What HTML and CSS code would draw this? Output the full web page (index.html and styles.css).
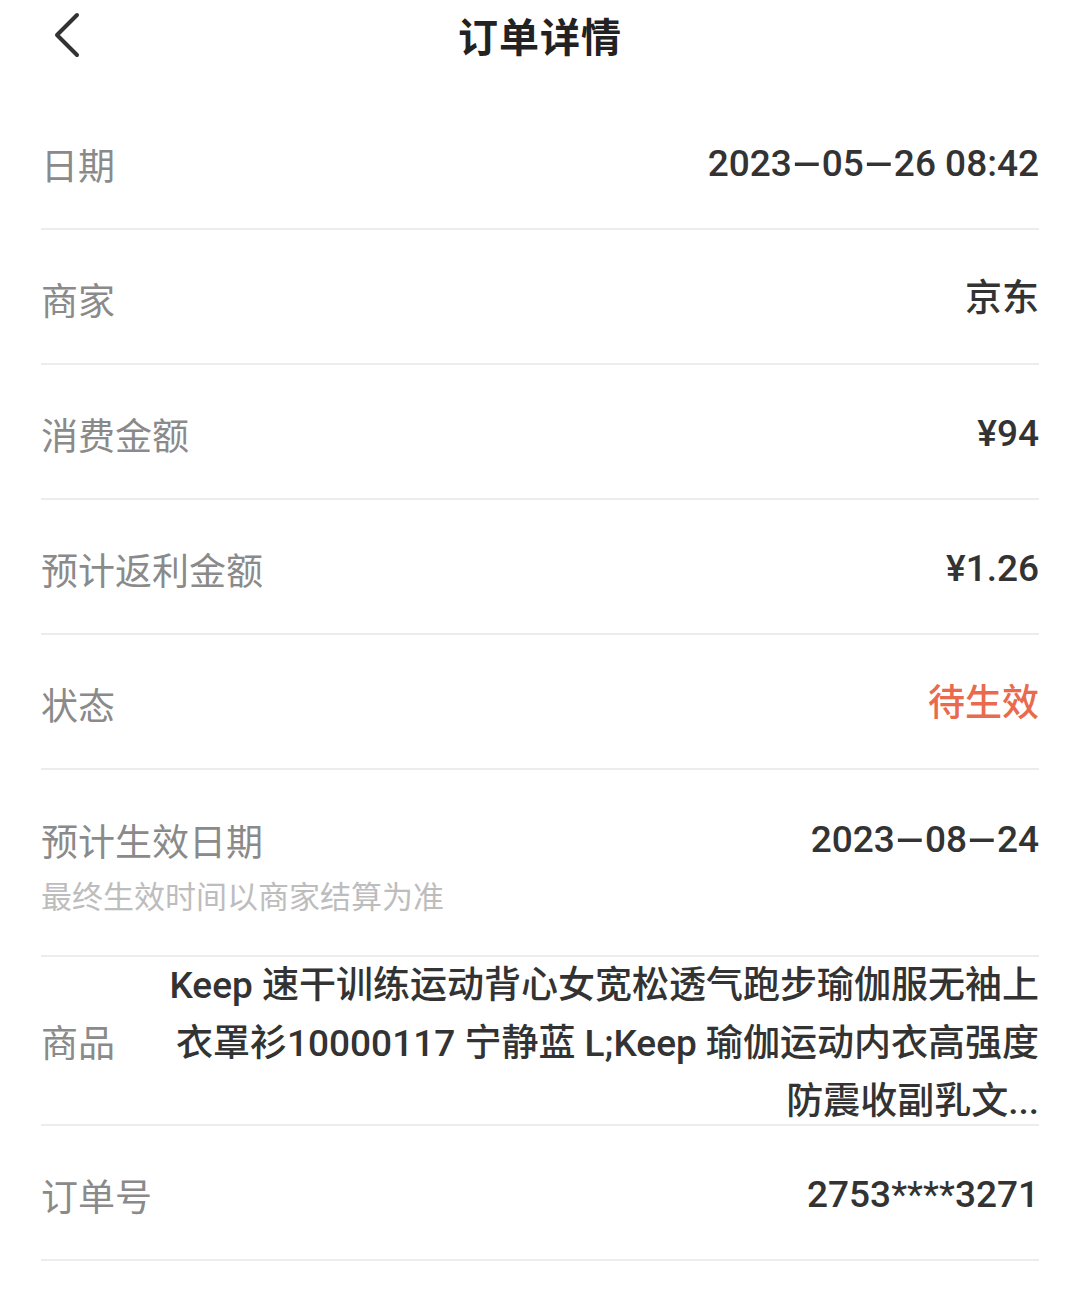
FILE: index.html
```html
<!DOCTYPE html>
<html lang="zh-CN">
<head>
<meta charset="utf-8">
<title>订单详情</title>
<link rel="stylesheet" href="styles.css">
</head>
<body>
<div class="page">
  <header class="header">
    <span class="back">
      <svg width="40" height="50" viewBox="0 0 40 50"><path d="M29 5 L9 25 L29 45" fill="none" stroke="#333" stroke-width="4" stroke-linecap="round" stroke-linejoin="round"/></svg>
    </span>
    <h1 class="title">订单详情</h1>
  </header>
  <div class="list">
    <div class="row"><span class="label">日期</span><span class="value">2023<span class="dash">-</span>05<span class="dash">-</span>26 08:42</span></div>
    <div class="row"><span class="label">商家</span><span class="value">京东</span></div>
    <div class="row"><span class="label">消费金额</span><span class="value">¥94</span></div>
    <div class="row"><span class="label">预计返利金额</span><span class="value">¥1.26</span></div>
    <div class="row"><span class="label">状态</span><span class="value status">待生效</span></div>
    <div class="row tall">
      <div class="line"><span class="label">预计生效日期</span><span class="value">2023<span class="dash">-</span>08<span class="dash">-</span>24</span></div>
      <div class="sub">最终生效时间以商家结算为准</div>
    </div>
    <div class="row goods">
      <span class="label">商品</span>
      <span class="value goods-text">Keep 速干训练运动背心女宽松透气跑步瑜伽服无袖上<br>衣罩衫10000117 宁静蓝 L;Keep 瑜伽运动内衣高强度<br>防震收副乳文...</span>
    </div>
    <div class="row"><span class="label">订单号</span><span class="value">2753<span class="stars">****</span>3271</span></div>
  </div>
</div>
</body>
</html>
```

FILE: styles.css
```css
html, body {
  margin: 0;
  padding: 0;
  background: #fff;
}
body {
  font-family: Roboto, "Noto Sans CJK SC", sans-serif;
  color: #333;
}
.page {
  width: 1080px;
}
.header {
  position: relative;
  height: 70px;
  display: flex;
  align-items: center;
  justify-content: center;
  margin-bottom: 25px;
}
.back {
  position: absolute;
  left: 48px;
  top: 10px;
  width: 40px;
  height: 50px;
}
.back svg {
  display: block;
}
.title {
  margin: 0;
  font-family: "Noto Sans CJK SC", sans-serif;
  font-size: 40px;
  font-weight: 700;
  color: #222;
  line-height: 70px;
  letter-spacing: 1px;
}
.list {
  padding: 0 41px;
}
.row {
  box-sizing: border-box;
  height: 135px;
  padding-top: 5px;
  border-bottom: 2px solid #ececec;
  display: flex;
  align-items: center;
  justify-content: space-between;
}
.label {
  font-family: "Noto Sans CJK SC", sans-serif;
  font-size: 37px;
  color: #8a8a8a;
  line-height: 50px;
  white-space: nowrap;
}
.value {
  font-size: 37px;
  color: #333;
  font-weight: 500;
  line-height: 50px;
  text-align: right;
  white-space: nowrap;
}
.dash {
  display: inline-block;
  width: 30px;
  text-align: center;
  transform: scaleX(2.5);
}
.stars {
  font-weight: 400;
}
.status {
  color: #ea6a4e;
}
.row.tall {
  height: 187px;
  padding-top: 45px;
  flex-direction: column;
  align-items: stretch;
  justify-content: flex-start;
}
.line {
  display: flex;
  justify-content: space-between;
  height: 50px;
}
.sub {
  font-family: "Noto Sans CJK SC", sans-serif;
  font-size: 31px;
  color: #bdbdbd;
  line-height: 60px;
}
.row.goods {
  height: 169px;
  padding-top: 0;
  align-items: center;
}
.goods-text {
  align-self: flex-start;
  line-height: 58px;
}
```
